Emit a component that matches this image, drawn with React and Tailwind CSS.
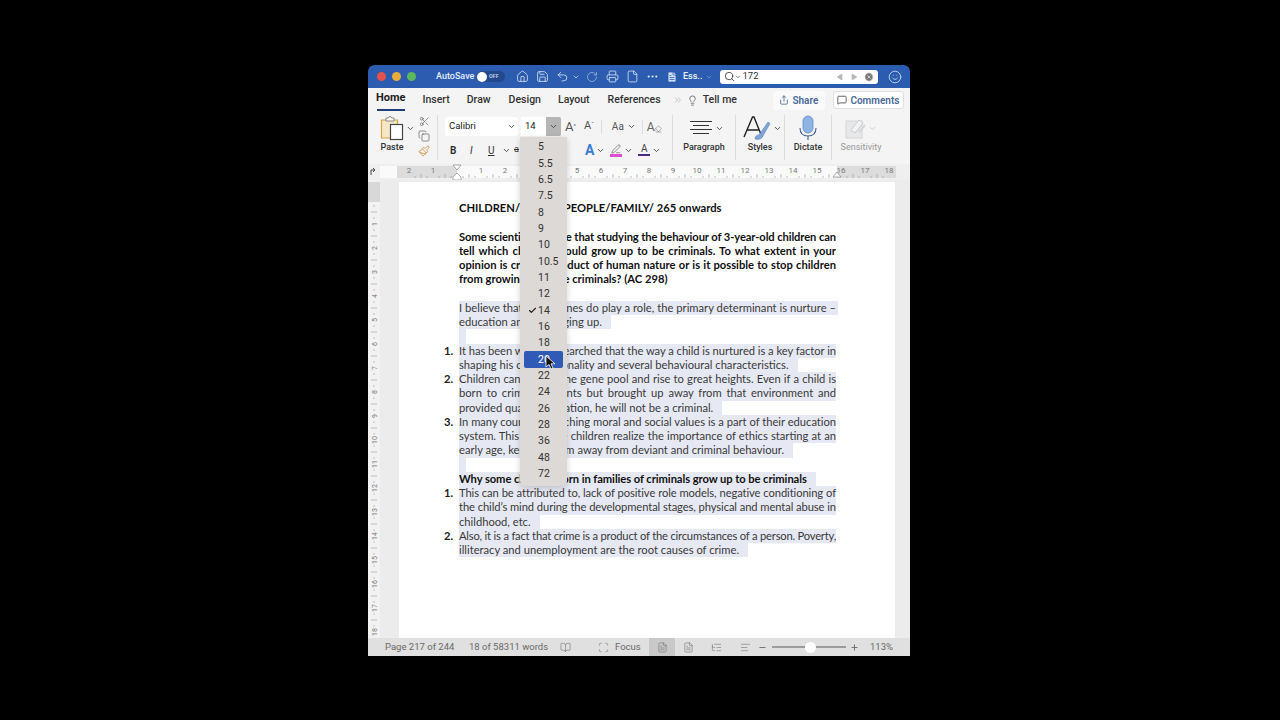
import {
  Home,
  Save,
  Undo2,
  RotateCw,
  Printer,
  File,
  Ellipsis,
  Search,
  ChevronDown,
  ChevronsRight,
  Smile,
  Scissors,
  Copy,
  Paintbrush,
  Lightbulb,
  Share,
  MessageSquare,
  Play,
  XCircle,
  Check,
  BookOpen,
  Scan,
  Minus,
  Plus,
  FileText,
  ListTree,
  AlignLeft,
  PenLine,
  Eraser,
} from "lucide-react";

const SIZES = ["5", "5.5", "6.5", "7.5", "8", "9", "10", "10.5", "11", "12", "14", "16", "18", "20", "22", "24", "26", "28", "36", "48", "72"];

const DOC = [
  { text: "CHILDREN/YOUNG PEOPLE/FAMILY/ 265 onwards", bold: true },
  {},
  { text: "Some scientists believe that studying the behaviour of 3-year-old children can", bold: true, fill: true, tight: "tracking-[-0.11px]" },
  { text: "tell which children would grow up to be criminals. To what extent in your", bold: true, fill: true },
  { text: "opinion is crime a product of human nature or is it possible to stop children", bold: true, fill: true },
  { text: "from growing up to be criminals? (AC 298)", bold: true },
  {},
  { text: "I believe that while genes do play a role, the primary determinant is nurture –", sel: true, fill: true, wide: true },
  { text: "education and upbringing up.", sel: true },
  { mark: true },
  { num: "1.", text: "It has been widely researched that the way a child is nurtured is a key factor in", sel: true, fill: true, tight: "tracking-[-0.06px]" },
  { text: "shaping his own personality and several behavioural characteristics.", sel: true },
  { num: "2.", text: "Children can escape the gene pool and rise to great heights. Even if a child is", sel: true, fill: true },
  { text: "born to criminal parents but brought up away from that environment and", sel: true, fill: true },
  { text: "provided quality education, he will not be a criminal.", sel: true },
  { num: "3.", text: "In many countries teaching moral and social values is a part of their education", sel: true, fill: true, tight: "tracking-[-0.03px]" },
  { text: "system. This helps the children realize the importance of ethics starting at an", sel: true, fill: true },
  { text: "early age, keeping them away from deviant and criminal behaviour.", sel: true },
  { mark: true },
  { text: "Why some children born in families of criminals grow up to be criminals", bold: true, sel: true, tight: "tracking-[-0.07px]" },
  { num: "1.", text: "This can be attributed to, lack of positive role models, negative conditioning of", sel: true, fill: true, tight: "tracking-[-0.09px]" },
  { text: "the child’s mind during the developmental stages, physical and mental abuse in", sel: true, fill: true, tight: "tracking-[-0.1px]" },
  { text: "childhood, etc.", sel: true },
  { num: "2.", text: "Also, it is a fact that crime is a product of the circumstances of a person. Poverty,", sel: true, fill: true, tight: "tracking-[-0.21px]" },
  { text: "illiteracy and unemployment are the root causes of crime.", sel: true },
];

function DocLine({ line }) {
  if (line.mark) {
    return (
      <div className="h-[14.25px]">
        <div className="h-full w-[7px] bg-[#e6e9f3]" />
      </div>
    );
  }
  if (!line.text) return <div className="h-[14.25px]" />;
  const tone = line.bold ? "font-bold text-[#111]" : "text-[#3a3a3a]";
  return (
    <div className="flex h-[14.25px] leading-[14.25px]">
      <span className="-ml-[15px] w-[15px] shrink-0 font-bold text-[#222]">{line.num}</span>
      {line.fill ? (
        <div className={`${line.wide ? "-mr-[2px] w-[379px] pr-[2px]" : "w-[377px]"} whitespace-nowrap text-justify [text-align-last:justify] ${tone} ${line.tight || ""} ${line.sel ? "bg-[#e6e9f3]" : ""}`}>
          {line.text}
        </div>
      ) : (
        <span className={`whitespace-nowrap ${tone} ${line.tight || ""} ${line.sel ? "bg-[#e6e9f3] pr-[9px]" : ""}`}>{line.text}</span>
      )}
    </div>
  );
}

function Tab({ label, className = "" }) {
  return <span className={`shrink-0 text-[10.5px] font-medium whitespace-nowrap text-[#333] ${className}`}>{label}</span>;
}

function Chev({ className = "" }) {
  return <ChevronDown size={9} strokeWidth={2.4} className={`shrink-0 text-[#444] ${className}`} />;
}

function Sep({ className = "" }) {
  return <div className={`w-px shrink-0 bg-[#dcdcdc] ${className}`} />;
}

function PasteIcon() {
  return (
    <svg width="24" height="26" viewBox="0 0 24 26" fill="none">
      <path d="M1.500 5h16v18h-16z" fill="#f6e7c6" stroke="#d9a441" strokeWidth="1.2" />
      <path d="M6 5V3h2.500a1.500 1.500 0 0 1 3 0H14v3H6z" fill="#fff" stroke="#8a8a8a" />
      <rect x="10.500" y="9.500" width="12" height="15" fill="#fff" stroke="#444" strokeWidth="1.2" />
    </svg>
  );
}

function StylesIcon() {
  return (
    <svg width="30" height="26" viewBox="0 0 30 26" fill="none">
      <path d="M1 22 9.500 2h1.500l8 20M4.500 15h11" stroke="#222" strokeWidth="1.4" />
      <path d="M12 24c0-3 2-4 4-4l9-13 2 1.500-8 14c-2 2-4 2-7 1.500z" fill="#7fa6d6" stroke="#5a7fae" strokeWidth="0.6" />
    </svg>
  );
}

function ParagraphIcon() {
  return (
    <svg width="22" height="16" viewBox="0 0 22 16" fill="none" stroke="#333" strokeWidth="1">
      <path d="M0 1.500h22M3 5.500h16M0 9.500h22M3 13.500h16" />
    </svg>
  );
}

function MicIcon() {
  return (
    <svg width="20" height="26" viewBox="0 0 20 26" fill="none">
      <rect x="5" y="1" width="10" height="17" rx="5" fill="#8fb3e3" stroke="#5f8bc8" strokeWidth="0.8" />
      <path d="M2 13c0 5 3 8 8 8s8-3 8-8M10 21v4" stroke="#3f5f8f" strokeWidth="1.1" />
    </svg>
  );
}

function SensitivityIcon() {
  return (
    <svg width="22" height="22" viewBox="0 0 22 22" fill="none">
      <rect x="1" y="4" width="16" height="17" fill="#e6e8ea" stroke="#d4d6d8" />
      <path d="M6 13 14 3l4 3-8 10z" fill="#f4f4f4" stroke="#c9cbce" />
      <path d="M14 15 20 8" stroke="#d4d6d8" strokeWidth="2" />
    </svg>
  );
}

function HRuler() {
  const ticks = [];
  for (let i = -2; i <= 18.1; i += 0.25) {
    const x = 89 + i * 24;
    if (Number.isInteger(i)) continue;
    const half = Number.isInteger(i * 2);
    ticks.push(<line key={i} x1={x} x2={x} y1={half ? 10 : 12} y2="14" stroke="#a3a3a3" strokeWidth="0.7" />);
  }
  const nums = [];
  for (let i = -2; i <= 18; i++) {
    if (i === 0) continue;
    nums.push(
      <text key={i} x={89 + i * 24} y="9" textAnchor="middle" fontSize="8" fill="#777" fontFamily="Roboto, sans-serif">
        {Math.abs(i)}
      </text>
    );
  }
  return (
    <svg width="542" height="16" viewBox="0 0 542 16" className="block shrink-0">
      <rect x="0" y="0" width="542" height="16" fill="#efefef" />
      <rect x="12" y="2" width="17" height="12" fill="#fafafa" />
      <path d="M3 11V6h4M5 4l2 2-2 2" stroke="#444" strokeWidth="1" fill="none" />
      <rect x="29" y="2" width="60" height="12" fill="#dcdcdc" />
      <rect x="89" y="2" width="380" height="12" fill="#fafafa" />
      <rect x="469" y="2" width="59" height="12" fill="#dcdcdc" />
      {ticks}
      {nums}
      <path d="M85 1h8l-4 5zM85 13l4-4 4 4v3h-8z" fill="#fff" stroke="#8a8a8a" strokeWidth="0.7" />
      <path d="M465 13l4-5 4 5z" fill="#fff" stroke="#8a8a8a" strokeWidth="0.7" />
    </svg>
  );
}

function VRuler() {
  const ticks = [];
  for (let i = 0; i <= 18.1; i += 0.25) {
    const y = 20 + i * 24;
    if (Number.isInteger(i)) continue;
    const half = Number.isInteger(i * 2);
    ticks.push(<line key={i} x1={half ? 3 : 5} x2={half ? 9 : 7} y1={y} y2={y} stroke="#a8a8a8" strokeWidth="0.7" />);
  }
  const nums = [];
  for (let i = 1; i <= 18; i++) {
    nums.push(
      <text key={i} x="6" y={20 + i * 24} textAnchor="middle" fontSize="7" fill="#777" fontFamily="Roboto, sans-serif" transform={`rotate(-90 6 ${20 + i * 24}) translate(0 2.5)`}>
        {i}
      </text>
    );
  }
  return (
    <svg width="12" height="458" viewBox="0 0 12 458" className="block shrink-0">
      <rect x="0" y="0" width="12" height="458" fill="#f2f2f2" />
      <rect x="0" y="2" width="12" height="20" fill="#d8d8d8" />
      {ticks}
      {nums}
    </svg>
  );
}

function TitleBar() {
  return (
    <div className="flex h-[23px] shrink-0 items-center rounded-t-[6px] bg-[#2b5cb0] pl-[9px] text-[#e4ecf8]">
      <span className="h-[9px] w-[9px] rounded-full bg-[#e2534c]" />
      <span className="ml-[6px] h-[9px] w-[9px] rounded-full bg-[#e9ad3a]" />
      <span className="ml-[6px] h-[9px] w-[9px] rounded-full bg-[#5cb85c]" />
      <span className="ml-[20px] w-[41px] text-[9px] font-medium whitespace-nowrap">AutoSave</span>
      <div className="flex h-[11px] w-[28px] items-center rounded-full bg-[#23498d]">
        <span className="h-[10px] w-[10px] rounded-full bg-white" />
        <span className="ml-[2px] text-[5.5px] font-semibold text-[#c8d4e8]">OFF</span>
      </div>
      <Home size={13} strokeWidth={1.4} className="ml-[11px]" />
      <Save size={13} strokeWidth={1.4} className="ml-[7px]" />
      <Undo2 size={13} strokeWidth={1.4} className="ml-[7px]" />
      <ChevronDown size={8} strokeWidth={2} className="ml-[3px]" />
      <RotateCw size={12} strokeWidth={1.4} className="ml-[6px] opacity-70" />
      <Printer size={13} strokeWidth={1.4} className="ml-[8px]" />
      <File size={13} strokeWidth={1.4} className="ml-[7px]" />
      <Ellipsis size={13} strokeWidth={2} className="ml-[7px]" />
      <FileText size={12} strokeWidth={1.6} fill="#cfe0f5" className="ml-[7px] text-[#2b5cb0]" />
      <span className="ml-[5px] text-[9px] font-semibold">Ess..</span>
      <ChevronDown size={8} strokeWidth={2} className="ml-[3px] opacity-50" />
      <div className="ml-[7px] flex h-[14px] w-[158px] shrink-0 items-center rounded-[3px] bg-white pl-[4px] text-[#333]">
        <Search size={11} strokeWidth={1.8} />
        <ChevronDown size={6} strokeWidth={2.4} />
        <span className="ml-[1px] text-[9.5px]">172</span>
        <Play size={8} fill="#b9b9b9" strokeWidth={0} className="ml-[78px] rotate-180" />
        <Play size={8} fill="#b9b9b9" strokeWidth={0} className="ml-[6px]" />
        <XCircle size={10} fill="#777" strokeWidth={1.5} className="ml-[6px] text-white" />
      </div>
      <Smile size={14} strokeWidth={1.4} className="ml-[10px] text-[#cfe0f5]" />
    </div>
  );
}

function TabRow() {
  return (
    <div className="flex h-[24px] shrink-0 items-center bg-[#f4f4f4] pl-[8px]">
      <div className="flex h-full shrink-0 flex-col items-center justify-center">
        <span className="mt-[1px] text-[11px] font-bold text-[#222]">Home</span>
        <span className="mt-[2px] h-[2px] w-[28px] bg-[#1f3f7a]" />
      </div>
      <Tab label="Insert" className="ml-[17px]" />
      <Tab label="Draw" className="ml-[17px]" />
      <Tab label="Design" className="ml-[18px]" />
      <Tab label="Layout" className="ml-[17px]" />
      <Tab label="References" className="ml-[18px]" />
      <ChevronsRight size={10} className="ml-[12px] shrink-0 text-[#bbb]" />
      <Lightbulb size={11} strokeWidth={1.5} className="ml-[4px] shrink-0 text-[#444]" />
      <Tab label="Tell me" className="ml-[5px]" />
      <div className="ml-[36px] flex h-[19px] w-[52px] shrink-0 items-center justify-center gap-[3px] rounded-[3px] bg-[#fafafa] text-[10px] font-semibold text-[#4d6a99]">
        <Share size={10} />
        Share
      </div>
      <div className="ml-[8px] flex h-[18px] w-[71px] shrink-0 items-center justify-center gap-[3px] rounded-[3px] border border-[#dfdfdf] bg-white text-[10px] font-semibold text-[#4d6a99]">
        <MessageSquare size={10} className="text-[#444]" />
        Comments
      </div>
    </div>
  );
}

function Ribbon() {
  const label = "text-[9px] font-medium text-[#333]";
  return (
    <div className="flex h-[52px] shrink-0 bg-[#f4f4f4] pt-[3px] pb-[4px]">
      <div className="flex w-[69px] shrink-0 pl-[12px]">
        <div className="flex flex-col items-center">
          <PasteIcon />
          <span className={label}>Paste</span>
        </div>
        <Chev className="mt-[9px] ml-[2px]" />
        <div className="ml-[3px] flex flex-col items-center gap-[3px] pt-[1px] text-[#555]">
          <Scissors size={11} strokeWidth={1.3} />
          <Copy size={12} strokeWidth={1.3} />
          <Paintbrush size={12} strokeWidth={1.5} className="text-[#c98a3a]" />
        </div>
      </div>
      <Sep />
      <div className="w-[234px] shrink-0 pt-[1px] pl-[7px]">
        <div className="flex h-[21px] items-center">
          <div className="flex h-[19px] w-[73px] items-center justify-between rounded-[3px] bg-white pr-[2px] pl-[4px] text-[9.5px] text-[#222]">
            Calibri
            <Chev />
          </div>
          <div className="ml-[3px] flex h-[19px] w-[25px] items-center bg-white pl-[4px] text-[9.5px] text-[#222]">14</div>
          <div className="flex h-[19px] w-[15px] items-center justify-center rounded-r-[2px] bg-[#b5b5b5]">
            <Chev className="text-[#333]" />
          </div>
          <span className="ml-[4px] text-[13px] text-[#555]">A<sup className="text-[6px]">^</sup></span>
          <span className="ml-[8px] text-[11px] text-[#555]">A<sup className="text-[6px]">ˇ</sup></span>
          <Sep className="ml-[7px] h-[14px]" />
          <span className="ml-[10px] text-[10px] text-[#555]">Aa</span>
          <Chev className="ml-[3px]" />
          <Sep className="ml-[6px] h-[14px]" />
          <div className="ml-[4px] flex items-center text-[#666]">
            <span className="text-[12px]">A</span>
            <Eraser size={8} strokeWidth={1.4} className="mt-[5px] -ml-[1px]" />
          </div>
        </div>
        <div className="mt-[2px] flex h-[22px] items-center pl-[5px] text-[10px] text-[#333]">
          <span className="w-[19px] font-bold">B</span>
          <span className="w-[19px] pl-[1px] italic">I</span>
          <span className="w-[14px] underline">U</span>
          <Chev />
          <span className="ml-[3px] text-[9px] line-through">a</span>
          <span className="ml-[66px] text-[14px] font-bold text-[#3a7bd5]">A</span>
          <Chev className="ml-[2px]" />
          <div className="ml-[5px] flex flex-col items-center">
            <PenLine size={10} strokeWidth={1.5} className="text-[#555]" />
            <span className="h-[3px] w-[12px] bg-[#e04fd0]" />
          </div>
          <Chev className="ml-[2px]" />
          <div className="ml-[5px] flex flex-col items-center leading-none">
            <span className="text-[10px] leading-[10px] text-[#444]">A</span>
            <span className="h-[2px] w-[12px] bg-[#4b2a85]" />
          </div>
          <Chev className="ml-[2px]" />
        </div>
      </div>
      <Sep />
      <div className="flex w-[62px] shrink-0 flex-col items-center">
        <div className="flex h-[26px] items-center pl-[6px]">
          <ParagraphIcon />
          <Chev className="ml-[3px]" />
        </div>
        <span className={label}>Paragraph</span>
      </div>
      <Sep />
      <div className="flex w-[48px] shrink-0 flex-col items-center">
        <div className="flex h-[26px] items-center pl-[4px]">
          <StylesIcon />
          <Chev />
        </div>
        <span className={label}>Styles</span>
      </div>
      <Sep />
      <div className="flex w-[46px] shrink-0 flex-col items-center">
        <div className="flex h-[26px] items-center">
          <MicIcon />
        </div>
        <span className={label}>Dictate</span>
      </div>
      <Sep />
      <div className="flex w-[58px] shrink-0 flex-col items-center">
        <div className="flex h-[26px] items-center">
          <SensitivityIcon />
          <Chev className="ml-[1px] text-[#ccc]" />
        </div>
        <span className="text-[9px] text-[#999]">Sensitivity</span>
      </div>
    </div>
  );
}

function SizeMenu() {
  return (
    <div className="absolute top-[72px] left-[152px] flex h-[349px] w-[47px] flex-col items-stretch rounded-b-[5px] bg-[#dcd9d6] px-[4px] pt-[2px] shadow-[0_2px_6px_rgba(0,0,0,0.18)]">
      {SIZES.map((s) => {
        const active = s === "20";
        return (
          <div key={s} className={`flex h-[16.35px] shrink-0 items-center rounded-[2px] text-[10.5px] ${active ? "bg-[#2f5bb7] text-white" : "text-[#333]"}`}>
            <span className="flex w-[14px] justify-end pr-[1px]">
              {s === "14" && <Check size={9} strokeWidth={3} className="text-[#222]" />}
            </span>
            {s}
          </div>
        );
      })}
      <svg width="11" height="15" viewBox="0 0 11 15" className="absolute top-[218px] left-[25px]">
        <path d="M1 1v11l3-2.500 2 4.500 2-1-2-4.200h4z" fill="#111" stroke="#fff" strokeWidth="0.8" />
      </svg>
    </div>
  );
}

function StatusBar() {
  return (
    <div className="flex h-[18px] shrink-0 items-center bg-[#e0e0e0] pl-[17px] text-[9.5px] text-[#6a6a6a]">
      <span className="w-[84px]">Page 217 of 244</span>
      <span className="w-[91px]">18 of 58311 words</span>
      <BookOpen size={11} strokeWidth={1.2} />
      <Scan size={11} strokeWidth={1.2} className="ml-[27px]" />
      <span className="ml-[6px] w-[26px]">Focus</span>
      <div className="ml-[8px] flex h-[18px] w-[26px] items-center justify-center bg-[#c9c9c9]">
        <FileText size={11} strokeWidth={1.2} />
      </div>
      <FileText size={11} strokeWidth={1.2} className="ml-[8px]" />
      <ListTree size={11} strokeWidth={1.2} className="ml-[17px]" />
      <AlignLeft size={11} strokeWidth={1.2} className="ml-[18px]" />
      <Minus size={9} strokeWidth={2.4} className="ml-[7px]" />
      <div className="ml-[5px] flex h-[2px] w-[74px] items-center bg-[#9c9c9c]">
        <span className="ml-[33px] h-[11px] w-[11px] shrink-0 rounded-full bg-white" />
      </div>
      <Plus size={9} strokeWidth={2.4} className="ml-[4px]" />
      <span className="ml-[11px]">113%</span>
    </div>
  );
}

export default function App() {
  return (
    <div className="h-[720px] w-[1280px] overflow-hidden bg-black pt-[65px] pl-[368px] font-[Roboto,sans-serif]">
      <div className="relative flex h-[591px] w-[542px] flex-col overflow-hidden rounded-t-[6px]">
        <TitleBar />
        <TabRow />
        <Ribbon />
        <HRuler />
        <div className="flex h-[458px] shrink-0 bg-[#ececec]">
          <VRuler />
          <div className="mt-[2px] ml-[19px] h-[456px] w-[496px] bg-white pt-[19px] pl-[60px] font-[Lato,sans-serif] text-[11.2px]">
            {DOC.map((line, i) => (
              <DocLine key={i} line={line} />
            ))}
          </div>
        </div>
        <StatusBar />
        <SizeMenu />
      </div>
    </div>
  );
}
